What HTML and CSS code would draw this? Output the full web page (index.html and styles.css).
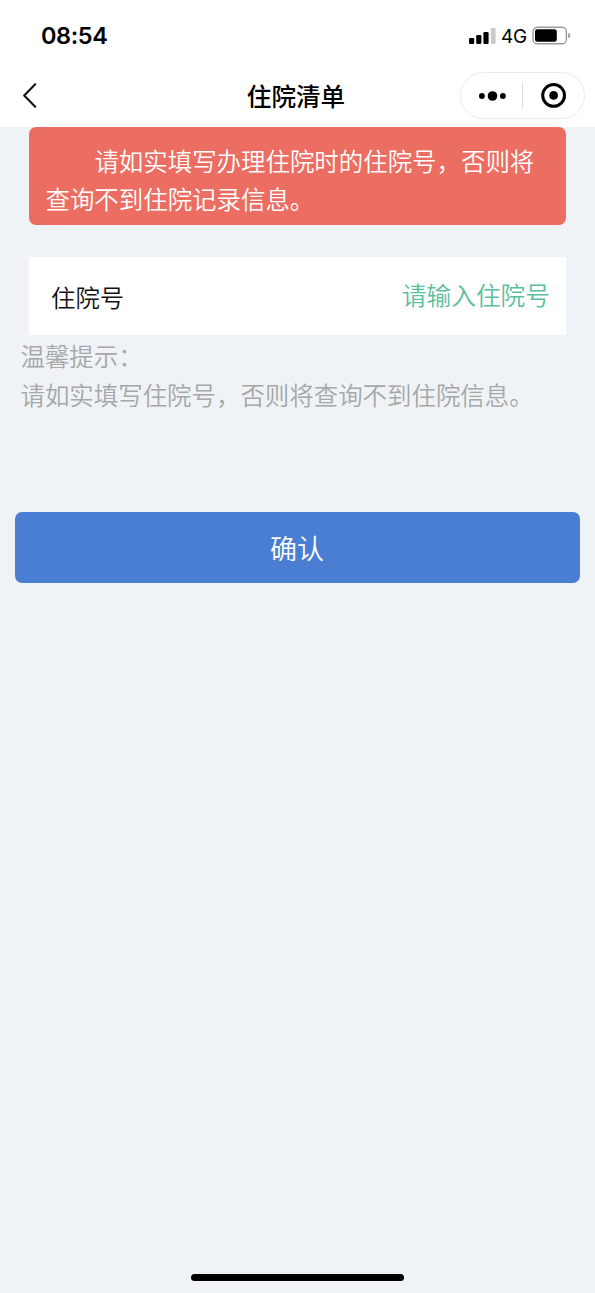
FILE: index.html
```html
<!DOCTYPE html>
<html lang="zh-CN">
<head>
<meta charset="utf-8">
<title>住院清单</title>
<link rel="stylesheet" href="styles.css">
</head>
<body>
<div class="screen">
  <header class="top">
    <div class="status">
      <span class="time">08:54</span>
      <div class="indicators">
        <svg class="signal" width="27" height="18" viewBox="0 0 27 18">
          <rect x="0" y="11" width="5.2" height="6" rx="1.2"/>
          <rect x="7.2" y="8" width="5.2" height="9" rx="1.2"/>
          <rect x="14.4" y="5" width="5.2" height="12" rx="1.2"/>
          <rect x="21.8" y="1" width="4.8" height="16" rx="1.2" fill="#c9c9c9"/>
        </svg>
        <span class="network">4G</span>
        <svg class="battery" width="39" height="20" viewBox="0 0 39 20">
          <rect x="1" y="1.2" width="33.4" height="16.6" rx="4.6" fill="none" stroke="#9a9a9a" stroke-width="1.4"/>
          <rect x="3" y="3.3" width="21.8" height="12.4" rx="2.2"/>
          <path d="M36.2 6.8 C39 7.4 39 11.6 36.2 12.2 Z" fill="#9a9a9a"/>
        </svg>
      </div>
    </div>
    <nav class="nav">
      <svg class="back" width="16" height="26" viewBox="0 0 16 26">
        <path d="M13.2 1.3 L2.2 12.5 L13.2 23.7" fill="none" stroke="#111" stroke-width="2.1" stroke-linecap="round" stroke-linejoin="round"/>
      </svg>
      <h1 class="title">住院清单</h1>
      <div class="capsule">
        <svg class="capsule-icon" width="28" height="12" viewBox="0 0 28 12">
          <circle cx="3.9" cy="6" r="2.9"/>
          <circle cx="14.5" cy="6" r="4.8"/>
          <circle cx="24.9" cy="6" r="2.9"/>
        </svg>
        <span class="divider"></span>
        <svg class="capsule-icon" width="26" height="26" viewBox="0 0 26 26">
          <circle cx="12.6" cy="12.4" r="10.9" fill="none" stroke="#000" stroke-width="3"/>
          <circle cx="12.6" cy="12.4" r="4.4"/>
        </svg>
      </div>
    </nav>
  </header>
  <main class="content">
    <p class="notice">请如实填写办理住院时的住院号，否则将查询不到住院记录信息。</p>
    <div class="field">
      <span class="label">住院号</span>
      <span class="placeholder">请输入住院号</span>
    </div>
    <div class="tips">
      <p class="tip">温馨提示：</p>
      <p class="tip">请如实填写住院号，否则将查询不到住院信息。</p>
    </div>
    <button class="confirm" type="button">确认</button>
  </main>
  <div class="home-bar"></div>
</div>
</body>
</html>
```
FILE: styles.css
```css
* {
  box-sizing: border-box;
}

body {
  margin: 0;
  font-family: "Noto Sans CJK SC", sans-serif;
  font-weight: 350;
}

p,
h1 {
  margin: 0;
}

svg {
  display: block;
  flex: none;
}

.screen {
  display: flex;
  flex-direction: column;
  height: 1293px;
  background: #eff3f6;
}

.top {
  height: 127px;
  background: #fff;
}

.status {
  display: flex;
  justify-content: space-between;
  align-items: center;
  height: 72px;
  padding: 0 24px 0 41px;
}

.time {
  padding-bottom: 1px;
  font: 600 23.5px/30px Inter, sans-serif;
  letter-spacing: -0.4px;
}

.indicators {
  display: flex;
  align-items: center;
}

.network {
  width: 27px;
  margin: 1px 4px 0 5px;
  font: 400 19px/24px Inter, sans-serif;
  letter-spacing: -0.3px;
}

.nav {
  display: grid;
  grid-template-columns: 110px 1fr 125px;
  align-items: center;
  height: 47px;
  padding: 0 10px 0 22px;
}

.title {
  padding-bottom: 2px;
  font-size: 24.6px;
  font-weight: 500;
  line-height: 36px;
  text-align: center;
}

.capsule {
  display: grid;
  grid-template-columns: 61px 1px 61px;
  align-items: center;
  justify-items: center;
  height: 47px;
  border: 1px solid #ededed;
  border-radius: 24px;
}

.divider {
  width: 1px;
  height: 27px;
  background: #dedede;
}

.content {
  display: flex;
  flex-direction: column;
  flex: 1;
}

.notice {
  height: 98px;
  margin: 0 29px;
  padding: 15px 15px 0 16.5px;
  border-radius: 7px;
  background: #ec6e62;
  color: #fff;
  font-size: 24.45px;
  line-height: 38px;
  text-indent: 2em;
}

.field {
  display: flex;
  justify-content: space-between;
  height: 78px;
  margin: 32px 29px 0;
  padding: 19px 16px 0 22px;
  background: #fff;
  font-size: 24.4px;
  line-height: 38px;
}

.label {
  padding-top: 2px;
  color: #111;
}

.placeholder {
  margin-top: -1px;
  color: #5abf9e;
  font-size: 24.7px;
}

.tips {
  padding: 1px 20px 0 20.5px;
  color: #a5a7a9;
  font-size: 24.45px;
  line-height: 39px;
}

.confirm {
  height: 71px;
  margin: 98px 15px 0;
  padding: 0 1px 1px 0;
  border: 0;
  border-radius: 7px;
  background: #4a7ed2;
  color: #fff;
  font: inherit;
  font-size: 27px;
}

.home-bar {
  align-self: center;
  width: 213px;
  height: 7px;
  margin-bottom: 12px;
  border-radius: 4px;
  background: #000;
}
```
